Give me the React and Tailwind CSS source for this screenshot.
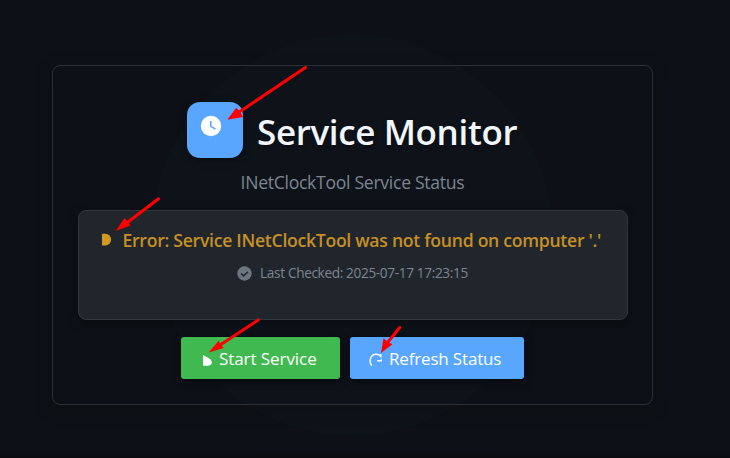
function Arrow({ from, tip, head }) {
  return (
    <g fill="#ff0000" stroke="none">
      <line x1={from[0]} y1={from[1]} x2={head[1][0]} y2={head[1][1]} stroke="#ff0000" strokeWidth="3" strokeLinecap="round" />
      <polygon points={[tip, ...head].map((p) => p.join(",")).join(" ")} />
    </g>
  );
}

export default function App() {
  return (
    <main className="relative h-[458px] w-[730px] overflow-hidden bg-[#0d1117] pl-[52px] pt-[65px] font-['Open_Sans',sans-serif]">
      <div className="absolute left-[152px] top-[35px] size-[400px] rounded-full bg-[#0e131a]" />
      <div className="absolute bottom-0 left-0 h-[5px] w-full bg-gradient-to-b from-[#0d1117] to-[#0a0c10]" />
      <section className="relative flex h-[340px] w-[601px] flex-col items-center rounded-lg border border-[#2b3036] pt-9 shadow-[0_4px_16px_rgba(14,16,16,0.45)]">
        <header className="flex h-14 w-[331px] items-center gap-[14px]">
          <div className="flex size-14 shrink-0 rounded-[13px] bg-[#58a6ff] pl-[13px] pt-[13px] shadow-[0_2px_8px_rgba(0,0,0,0.4)]">
            <svg width="22" height="22" viewBox="0 0 22 22" fill="none">
              <circle cx="11" cy="11" r="10.2" fill="#fff" />
              <path d="M10.8 6v5.4l4.7 2.7" stroke="#58a6ff" strokeWidth="1.5" />
            </svg>
          </div>
          <h1 className="whitespace-nowrap pt-1 text-[35px] font-semibold leading-[50px] tracking-[-0.36px] text-[#f0f6fc] [text-shadow:0_2px_4px_rgba(0,0,0,0.4)]">Service Monitor</h1>
        </header>
        <p className="mt-3 h-6 whitespace-nowrap text-[17.6px] leading-6 tracking-[-0.29px] text-[#7d8590]">INetClockTool Service Status</p>
        <div className="mt-4 flex h-[110px] w-[550px] shrink-0 flex-col items-center rounded-lg border border-[#30363d] bg-[#21262d] pt-[15px] shadow-[0_4px_12px_rgba(0,0,0,0.35)]">
          <div className="flex h-7 w-[502px] items-center">
            <svg className="shrink-0" width="21" height="16" viewBox="0 0 21 16">
              <path d="M0 1.8h3.5a5.6 5.8 0 0 1 0 11.6H0z" fill="#d29922" />
            </svg>
            <span className="whitespace-nowrap text-[17.6px] font-semibold tracking-[-0.27px] text-[#c69022]">Error: Service INetClockTool was not found on computer '.'</span>
          </div>
          <div className="mt-[7px] flex h-6 items-center gap-2 whitespace-nowrap text-[13.6px] tracking-[-0.34px] text-[#7d8590]">
            <svg width="15" height="15" viewBox="0 0 15 15" fill="none">
              <circle cx="7.5" cy="7.5" r="7.2" fill="#6e7681" />
              <path d="M4 7.5l2.6 2.4 4.4-4.2" stroke="#21262d" strokeWidth="1.5" />
            </svg>
            <span>Last Checked: 2025-07-17 17:23:15</span>
          </div>
        </div>
        <div className="mt-[17px] flex gap-[10px]">
          <button className="flex h-[42px] w-[159px] items-center rounded-[3px] bg-[#41b951] pl-[22px] text-white shadow-[0_2px_8px_rgba(0,0,0,0.6)]">
            <svg className="shrink-0" width="16" height="22" viewBox="0 0 16 22">
              <path d="M0 8v10.7h4.5c2.6 0 4.3-1.4 4.3-3.3 0-1.7-1.2-3.2-3.3-4.4z" fill="#fff" />
            </svg>
            <span className="whitespace-nowrap pt-px text-[17px] tracking-[-0.07px]">Start Service</span>
          </button>
          <button className="flex h-[42px] w-[174px] items-center rounded-[3px] bg-[#58a6ff] pl-[19px] text-white shadow-[0_2px_8px_rgba(0,0,0,0.6)]">
            <svg className="shrink-0" width="20" height="22" viewBox="0 0 20 22" fill="none">
              <path d="M2.8 18.6C-1 13.5 2.2 7.3 7.2 7.3c1.9 0 3.5.9 4.6 2.2V7M8.2 13.7h4.1v-1.4" stroke="#fff" strokeWidth="1.4" />
            </svg>
            <span className="whitespace-nowrap pt-px text-[17px] tracking-[-0.17px]">Refresh Status</span>
          </button>
        </div>
      </section>
      <svg className="absolute left-0 top-0" width="730" height="458">
        <Arrow from={[305.5, 67.5]} tip={[227.3, 119.7]} head={[[236.2, 107.7], [240, 111.5], [243, 117]]} />
        <Arrow from={[158.5, 198.8]} tip={[115.7, 231]} head={[[124.5, 218], [128, 222], [130.5, 225.5]]} />
        <Arrow from={[258.5, 319.8]} tip={[208.7, 352.6]} head={[[218.8, 340.5], [220.5, 344.7], [223.8, 348]]} />
        <Arrow from={[399.7, 327.5]} tip={[381, 353]} head={[[383.5, 338.3], [388, 342], [392.5, 344.3]]} />
      </svg>
    </main>
  );
}
